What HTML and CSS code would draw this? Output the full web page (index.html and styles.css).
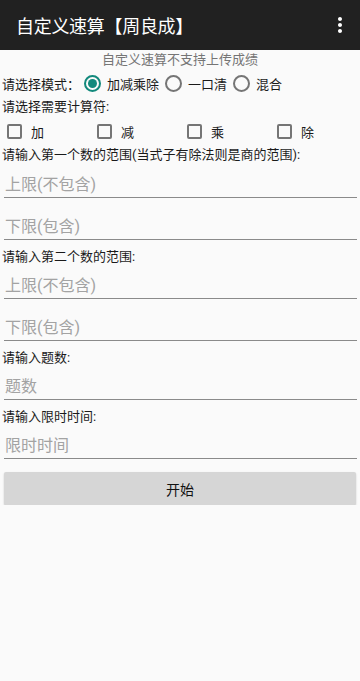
FILE: index.html
```html
<!DOCTYPE html>
<html lang="zh-CN">
<head>
  <meta charset="UTF-8">
  <title>自定义速算</title>
  <meta name="viewport" content="width=device-width, initial-scale=1.0" />
  <link rel="stylesheet" href="styles.css">
</head>
<body>
  <!-- Barre d'application -->
  <header class="appbar">
    <h1>自定义速算【周良成】</h1>
    <svg class="more" viewBox="0 0 24 24" width="24" height="24">
      <path fill="#fff" d="M12 8c1.1 0 2-.9 2-2s-.9-2-2-2-2 .9-2 2 .9 2 2 2zm0 2c-1.1 0-2 .9-2 2s.9 2 2 2 2-.9 2-2-.9-2-2-2zm0 6c-1.1 0-2 .9-2 2s.9 2 2 2 2-.9 2-2-.9-2-2-2z"/>
    </svg>
  </header>

  <main>
    <p class="notice">自定义速算不支持上传成绩</p>

    <!-- Mode -->
    <div class="mode-row">
      <span class="row-label">请选择模式：</span>
      <label class="radio"><span class="radio-dot checked"></span>加减乘除</label>
      <label class="radio"><span class="radio-dot"></span>一口清</label>
      <label class="radio"><span class="radio-dot"></span>混合</label>
    </div>

    <p class="field-label first">请选择需要计算符:</p>
    <div class="ops-row">
      <label class="check"><span class="box"></span>加</label>
      <label class="check"><span class="box"></span>减</label>
      <label class="check"><span class="box"></span>乘</label>
      <label class="check"><span class="box"></span>除</label>
    </div>

    <p class="field-label first">请输入第一个数的范围(当式子有除法则是商的范围):</p>
    <input class="field" type="text" placeholder="上限(不包含)">
    <input class="field pair" type="text" placeholder="下限(包含)">

    <p class="field-label">请输入第二个数的范围:</p>
    <input class="field" type="text" placeholder="上限(不包含)">
    <input class="field pair" type="text" placeholder="下限(包含)">

    <p class="field-label">请输入题数:</p>
    <input class="field" type="text" placeholder="题数">

    <p class="field-label">请输入限时时间:</p>
    <input class="field" type="text" placeholder="限时时间">

    <button class="start-btn">开始</button>
  </main>
</body>
</html>
```

FILE: styles.css
```css
/* ------------------------------
   Variables
   ------------------------------ */
:root {
  --bar-bg: #212121;
  --page-bg: #fafafa;
  --text: #1a1a1a;
  --muted: #757575;
  --hint: #a3a3a3;
  --accent: #12897c;
  --line: #8a8a8a;
}

* {
  margin: 0;
  padding: 0;
  box-sizing: border-box;
}

body {
  background-color: var(--page-bg);
  color: var(--text);
  font-family: Roboto, "Noto Sans CJK SC", sans-serif;
  font-size: 13px;
}

/* ------------------------------
   App bar
   ------------------------------ */
.appbar {
  height: 50px;
  background-color: var(--bar-bg);
  display: flex;
  align-items: center;
  justify-content: space-between;
  padding: 0 8px 0 16px;
}
.appbar h1 {
  color: #fff;
  font-size: 18px;
  font-weight: 400;
  letter-spacing: -0.3px;
}

/* ------------------------------
   Contenu
   ------------------------------ */
.notice {
  text-align: center;
  line-height: 20px;
  color: var(--muted);
}

.mode-row {
  height: 26px;
  display: flex;
  align-items: center;
  padding-left: 2px;
}
.row-label {
  width: 82px;
}
.radio {
  display: flex;
  align-items: center;
  gap: 6px;
  margin-right: 6px;
}
.radio-dot {
  width: 17px;
  height: 17px;
  border: 2px solid var(--muted);
  border-radius: 50%;
  display: flex;
  align-items: center;
  justify-content: center;
}
.radio-dot.checked {
  border-color: var(--accent);
}
.radio-dot.checked::after {
  content: "";
  width: 9px;
  height: 9px;
  border-radius: 50%;
  background-color: var(--accent);
}

.field-label {
  padding: 7px 0 0 2px;
  line-height: 20px;
}
.field-label.first {
  padding-top: 0;
  line-height: 22px;
}

.ops-row {
  height: 26px;
  display: grid;
  grid-template-columns: repeat(4, 90px);
  align-items: center;
}
.check {
  display: flex;
  align-items: center;
  gap: 9px;
  padding-left: 7px;
}
.box {
  width: 15px;
  height: 15px;
  border: 2px solid var(--muted);
  border-radius: 2px;
}

.field {
  display: block;
  width: calc(100% - 7px);
  margin: 0 3px 0 4px;
  padding: 8px 1px 3px;
  line-height: 20px;
  height: 32px;
  font-family: inherit;
  font-size: 16px;
  color: var(--text);
  background: transparent;
  border: none;
  border-bottom: 1px solid var(--line);
  outline: none;
}
.field::placeholder {
  color: var(--hint);
}
.field.pair {
  margin-top: 10px;
}

.start-btn {
  display: block;
  width: calc(100% - 8px);
  height: 33px;
  margin: 13px 4px 0;
  background-color: #d6d6d6;
  border: none;
  border-radius: 2px;
  box-shadow: 0 1px 2px rgba(0, 0, 0, 0.2);
  font-family: inherit;
  font-size: 14px;
  color: #111;
}
```
